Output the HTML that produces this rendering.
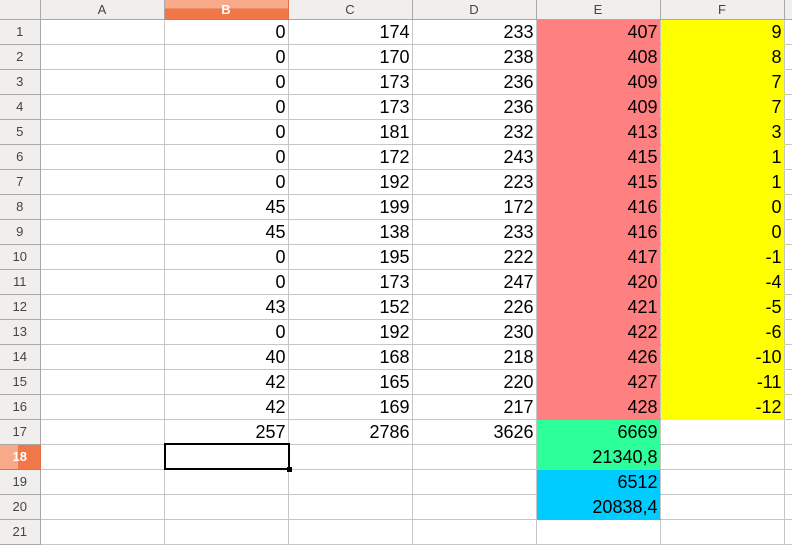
<!DOCTYPE html>
<html><head><style>
body{margin:0;width:792px;height:530px;overflow:hidden;background:#fff;font-family:"Liberation Sans",sans-serif;position:relative}
table{border-collapse:collapse;table-layout:fixed;position:absolute;left:0;top:0;width:804px}
td,th{padding:0 2px 0 0;overflow:hidden;white-space:nowrap;box-sizing:border-box}
td{border:1px solid #c6c6c6;height:25px;text-align:right;font-size:18px;line-height:24px;color:#000}
th{background:#f0efee;border:1px solid #a8a8a8;font-weight:normal;color:#444;font-size:13px;text-align:center;padding:0}
tr.h th{height:19px;border-top:none}
th.r{border-left:none}
.e{background:#ff8080;border-top-color:#ff8080;border-bottom-color:#ff8080}
.f{background:#ffff00;border-top-color:#ffff00;border-bottom-color:#ffff00}
.g{background:#2dff9a;border-top-color:#2dff9a;border-bottom-color:#2dff9a}
.c{background:#00ccff;border-top-color:#00ccff;border-bottom-color:#00ccff}
th.s{background:linear-gradient(#f7a989 0 45%,#f07848 45%);color:#fff;font-weight:bold;border-color:#e07040}
th.sr{background:linear-gradient(90deg,#f7a989 0 45%,#f07848 45%);color:#fff;font-weight:bold;border-color:#e07040}
#sel{position:absolute;left:164px;top:443px;width:122px;height:23px;border:2px solid #000}
#sel:after{content:"";position:absolute;right:-4px;bottom:-4px;width:5px;height:5px;background:#000}
</style></head><body>
<table>
<colgroup><col style="width:40px"><col style="width:124px"><col style="width:124px"><col style="width:124px"><col style="width:124px"><col style="width:124px"><col style="width:124px"><col style="width:20px"></colgroup>
<tr class="h"><th class="r"></th><th>A</th><th class="s">B</th><th>C</th><th>D</th><th>E</th><th>F</th><th></th></tr>
<tr><th class="r">1</th><td></td><td>0</td><td>174</td><td>233</td><td class="e">407</td><td class="f">9</td><td></td></tr>
<tr><th class="r">2</th><td></td><td>0</td><td>170</td><td>238</td><td class="e">408</td><td class="f">8</td><td></td></tr>
<tr><th class="r">3</th><td></td><td>0</td><td>173</td><td>236</td><td class="e">409</td><td class="f">7</td><td></td></tr>
<tr><th class="r">4</th><td></td><td>0</td><td>173</td><td>236</td><td class="e">409</td><td class="f">7</td><td></td></tr>
<tr><th class="r">5</th><td></td><td>0</td><td>181</td><td>232</td><td class="e">413</td><td class="f">3</td><td></td></tr>
<tr><th class="r">6</th><td></td><td>0</td><td>172</td><td>243</td><td class="e">415</td><td class="f">1</td><td></td></tr>
<tr><th class="r">7</th><td></td><td>0</td><td>192</td><td>223</td><td class="e">415</td><td class="f">1</td><td></td></tr>
<tr><th class="r">8</th><td></td><td>45</td><td>199</td><td>172</td><td class="e">416</td><td class="f">0</td><td></td></tr>
<tr><th class="r">9</th><td></td><td>45</td><td>138</td><td>233</td><td class="e">416</td><td class="f">0</td><td></td></tr>
<tr><th class="r">10</th><td></td><td>0</td><td>195</td><td>222</td><td class="e">417</td><td class="f">-1</td><td></td></tr>
<tr><th class="r">11</th><td></td><td>0</td><td>173</td><td>247</td><td class="e">420</td><td class="f">-4</td><td></td></tr>
<tr><th class="r">12</th><td></td><td>43</td><td>152</td><td>226</td><td class="e">421</td><td class="f">-5</td><td></td></tr>
<tr><th class="r">13</th><td></td><td>0</td><td>192</td><td>230</td><td class="e">422</td><td class="f">-6</td><td></td></tr>
<tr><th class="r">14</th><td></td><td>40</td><td>168</td><td>218</td><td class="e">426</td><td class="f">-10</td><td></td></tr>
<tr><th class="r">15</th><td></td><td>42</td><td>165</td><td>220</td><td class="e">427</td><td class="f">-11</td><td></td></tr>
<tr><th class="r">16</th><td></td><td>42</td><td>169</td><td>217</td><td class="e">428</td><td class="f">-12</td><td></td></tr>
<tr><th class="r">17</th><td></td><td>257</td><td>2786</td><td>3626</td><td class="g">6669</td><td></td><td></td></tr>
<tr><th class="r sr">18</th><td></td><td></td><td></td><td></td><td class="g">21340,8</td><td></td><td></td></tr>
<tr><th class="r">19</th><td></td><td></td><td></td><td></td><td class="c">6512</td><td></td><td></td></tr>
<tr><th class="r">20</th><td></td><td></td><td></td><td></td><td class="c">20838,4</td><td></td><td></td></tr>
<tr><th class="r">21</th><td></td><td></td><td></td><td></td><td></td><td></td><td></td></tr>
</table>
<div id="sel"></div>
</body></html>
